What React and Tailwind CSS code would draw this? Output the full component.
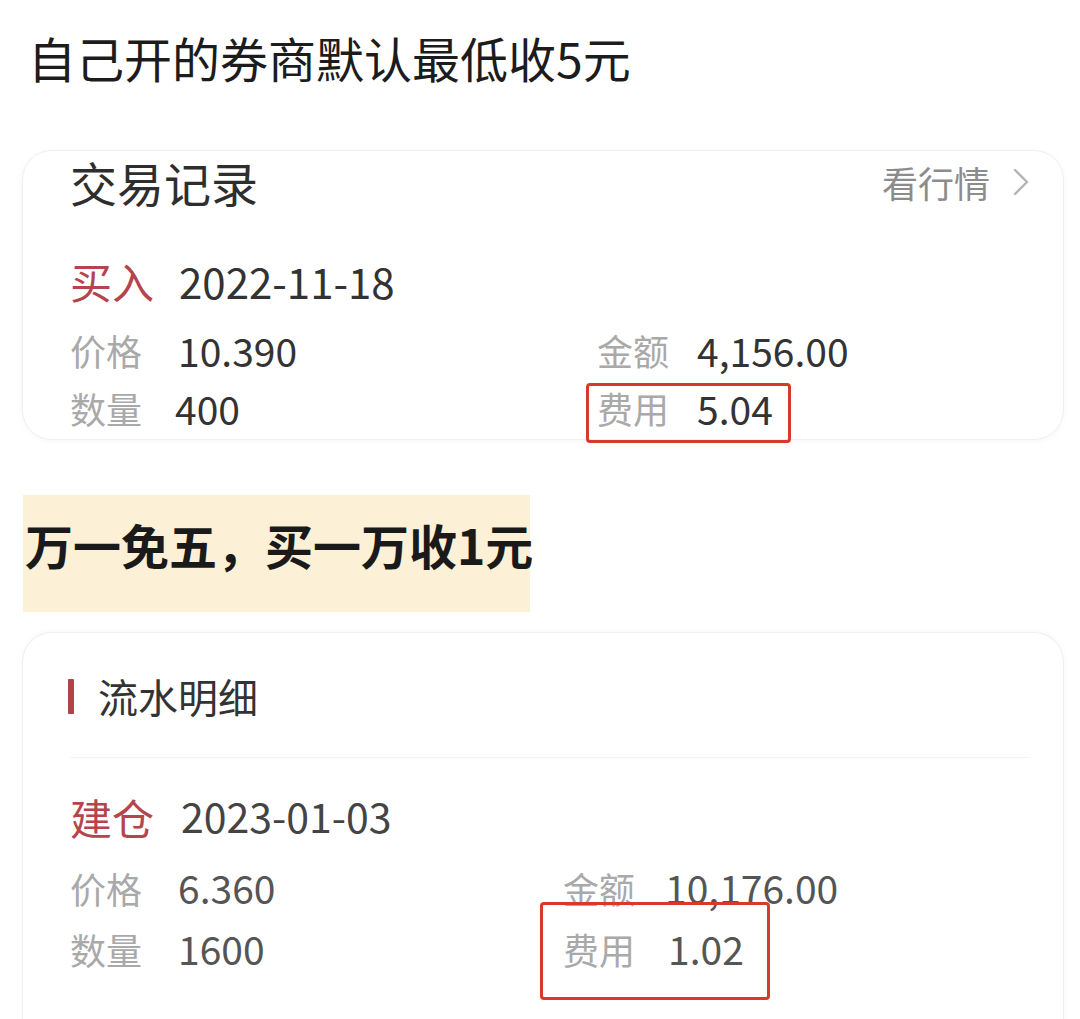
import React from 'react';

const font = { fontFamily: '"Noto Sans CJK SC", "Noto Sans", sans-serif' };

const Chevron = () => (
  <svg width="18" height="30" viewBox="0 0 18 30" fill="none">
    <polyline points="3,3 15,15 3,27" stroke="#b4b4b4" strokeWidth="2.4" strokeLinecap="round" strokeLinejoin="round" />
  </svg>
);

// red annotation frame drawn over a cell
const Mark = ({ className }) => (
  <span className={`absolute border-[3px] border-[#d8392d] rounded-[4px] pointer-events-none ${className}`} />
);

const Cell = ({ label, value, labelW, valueClass = 'text-[#333]', children }) => (
  <div className="relative flex items-center whitespace-nowrap">
    <span className={`${labelW} text-[36px] text-[#a9a9a9]`}>{label}</span>
    <span className={`text-[39px] ${valueClass}`}>{value}</span>
    {children}
  </div>
);

const App = () => {
  return (
    <div className="min-h-screen bg-white pb-10" style={font}>
      <div className="pt-[33px] pl-[28px] text-[48px] leading-[48px] text-[#1c1c1c] whitespace-nowrap">自己开的券商默认最低收5元</div>

      {/* 交易记录 */}
      <div className="mt-[69px] ml-[22px] w-[1042px] rounded-[30px] border border-[#efefef] shadow-[0_1px_6px_rgba(0,0,0,0.04)] pl-[47px] pr-[33px] pt-[8px] pb-[2px]">
        <div className="flex items-center justify-between h-[46px]">
          <span className="text-[47px] leading-[46px] text-[#2e2e2e]">交易记录</span>
          <span className="flex items-center gap-[22px] text-[36px] leading-[46px] text-[#8c8c8c]">
            看行情
            <Chevron />
          </span>
        </div>
        <div className="mt-[40px] h-[70px] flex items-center gap-[25px]">
          <span className="text-[42px] text-[#b5444c]">买入</span>
          <span className="text-[42px] text-[#333]">2022-11-18</span>
        </div>
        <div className="mt-[6px] grid grid-cols-[527px_1fr] auto-rows-[58px] items-center">
          <Cell label="价格" value="10.390" labelW="w-[108px]" />
          <Cell label="金额" value="4,156.00" labelW="w-[100px]" />
          <Cell label="数量" value="400" labelW="w-[105px]" />
          <Cell label="费用" value="5.04" labelW="w-[100px]">
            <Mark className="left-[-11px] top-[4px] w-[205px] h-[60px]" />
          </Cell>
        </div>
      </div>

      <div className="mt-[55px] ml-[23px] w-[507px] bg-[#fcf0d7] pt-[25px] pb-[44px] pl-[2px]">
        <div className="text-[48px] leading-[48px] font-bold text-[#1a1a1a] whitespace-nowrap">万一免五，买一万收1元</div>
      </div>

      {/* 流水明细 */}
      <div className="mt-[20px] ml-[22px] w-[1042px] rounded-t-[30px] border border-b-0 border-[#efefef] shadow-[0_-1px_6px_rgba(0,0,0,0.03)] pl-[47px] pr-[33px] pt-[43px] pb-[60px]">
        <div className="flex items-center h-[40px] -ml-[2px]">
          <span className="w-[6px] h-[35px] bg-[#b0434a] rounded-[1px]" />
          <span className="ml-[24px] text-[40px] leading-[40px] text-[#333]">流水明细</span>
        </div>
        <div className="mt-[41px] h-px bg-[#f3f3f3]" />
        <div className="mt-[23px] h-[70px] flex items-center gap-[27px]">
          <span className="text-[42px] text-[#b5444c]">建仓</span>
          <span className="text-[41px] text-[#444]">2023-01-03</span>
        </div>
        <div className="mt-[6px] grid grid-cols-[493px_1fr] auto-rows-[61px] items-center">
          <Cell label="价格" value="6.360" labelW="w-[108px]" valueClass="text-[#555]" />
          <Cell label="金额" value="10,176.00" labelW="w-[102px]" valueClass="text-[#555]" />
          <Cell label="数量" value="1600" labelW="w-[108px]" valueClass="text-[#555]" />
          <Cell label="费用" value="1.02" labelW="w-[105px]" valueClass="text-[#555]">
            <Mark className="left-[-23px] top-[-17px] w-[230px] h-[98px]" />
          </Cell>
        </div>
      </div>
    </div>
  );
};

export default App;
